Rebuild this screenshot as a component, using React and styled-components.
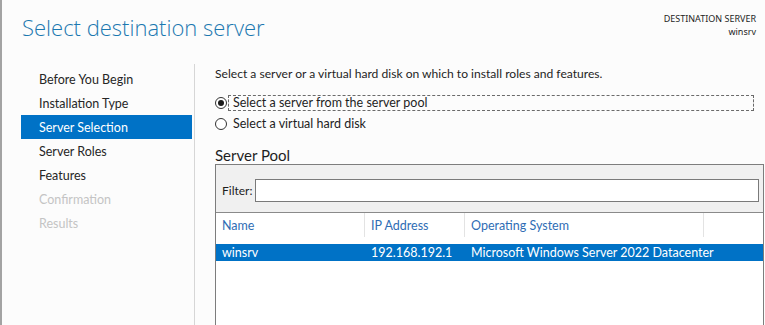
import React from "react";
import styled, { createGlobalStyle } from "styled-components";

const Global = createGlobalStyle`
  html, body { margin: 0; padding: 0; background: #fcfcfc; }
  body { font-family: Lato, "Noto Sans", sans-serif; color: #1e1e1e; }
  * { box-sizing: border-box; }
`;

const Page = styled.div`
  width: 765px;
  height: 325px;
  overflow: hidden;
  display: flex;
  flex-direction: column;
  border-left: 2px solid #a3a3a3;
  position: relative;
  &::before {
    content: "";
    position: absolute;
    left: -2px;
    top: 18px;
    width: 2px;
    height: 24px;
    background: #3a6f8f;
  }
`;

const Header = styled.header`
  display: flex;
  justify-content: space-between;
  align-items: flex-start;
  height: 64px;
  padding: 9px 9px 0 20px;
`;

const Title = styled.h1`
  margin: 0;
  padding-top: 3px;
  font-family: "Open Sans", Lato, sans-serif;
  font-weight: 300;
  font-size: 22px;
  line-height: 31px;
  color: #1b78b0;
`;

const Dest = styled.div`
  text-align: right;
  font-family: "Noto Sans", sans-serif;
  font-size: 9px;
  line-height: 13px;
  padding-top: 3px;
  color: #1e1e1e;
`;

const Body = styled.div`
  flex: 1;
  display: flex;
  min-height: 0;
`;

const Sidebar = styled.nav`
  width: 193px;
  flex: none;
  border-right: 1px solid #d6d6d6;
  padding: 3px 0 0 19px;
  display: flex;
  flex-direction: column;
`;

const NavItem = styled.div`
  height: 24px;
  width: 171px;
  display: flex;
  align-items: center;
  padding-left: 18px;
  font-size: 12.5px;
  background: ${(p) => (p.$active ? "#0072c6" : "transparent")};
  color: ${(p) => (p.$active ? "#ffffff" : p.$disabled ? "#c4c4c4" : "#262626")};
`;

const Content = styled.main`
  flex: 1;
  padding: 2px 1px 0 20px;
  display: flex;
  flex-direction: column;
  min-width: 0;
`;

const Intro = styled.p`
  margin: 0;
  font-size: 12.1px;
  line-height: 16px;
`;

const Options = styled.div`
  margin-top: 13px;
  display: flex;
  flex-direction: column;
  gap: 5px;
`;

const Option = styled.label`
  display: flex;
  align-items: center;
  gap: 1px;
  height: 16px;
  font-size: 12.5px;
`;

const Radio = styled.span`
  width: 12px;
  height: 12px;
  border-radius: 50%;
  border: 1px solid #333;
  background: #fff;
  display: flex;
  align-items: center;
  justify-content: center;
  flex: none;
  &::after {
    content: "";
    width: 6px;
    height: 6px;
    border-radius: 50%;
    background: ${(p) => (p.$checked ? "#1a1a1a" : "transparent")};
  }
`;

const OptionText = styled.span`
  flex: ${(p) => (p.$focused ? 1 : "none")};
  margin-right: ${(p) => (p.$focused ? "10px" : 0)};
  height: 16px;
  line-height: 14px;
  padding: 0 4px;
  border: 1px dashed ${(p) => (p.$focused ? "#6a6a6a" : "transparent")};
`;

const PoolTitle = styled.h2`
  margin: 14px 0 0;
  font-weight: 400;
  font-size: 15px;
  line-height: 18px;
`;

const PoolBox = styled.div`
  margin-top: 0;
  flex: 1;
  border: 1px solid #7d7d7d;
  border-bottom: none;
  background: #fff;
  display: flex;
  flex-direction: column;
`;

const FilterBar = styled.div`
  height: 48px;
  background: #f0f0f0;
  border-bottom: 1px solid #8a8a8a;
  display: flex;
  align-items: center;
  padding: 4px 4px 0 6px;
  font-size: 12px;
`;

const FilterLabel = styled.span`
  width: 33px;
  flex: none;
`;

const FilterInput = styled.div`
  flex: 1;
  height: 23px;
  border: 1px solid #7a7a7a;
  background: #fff;
`;

const Grid = styled.div`
  display: grid;
  grid-template-columns: 149px 100px 239px 1fr;
`;

const HeadCell = styled.div`
  height: 24px;
  display: flex;
  align-items: center;
  padding-left: 6px;
  font-size: 12.5px;
  color: #2f6db5;
  border-right: ${(p) => (p.$last ? "none" : "1px solid #e3e3e3")};
`;

const Row = styled.div`
  margin-top: 7px;
  height: 17px;
  display: grid;
  grid-template-columns: 149px 100px 1fr;
  background: ${(p) => (p.$selected ? "#0072c6" : "transparent")};
  color: ${(p) => (p.$selected ? "#fff" : "#1e1e1e")};
  font-size: 12.5px;
  align-items: center;
`;

const Cell = styled.div`
  padding-left: 6px;
  white-space: nowrap;
`;

const nav = [
  { label: "Before You Begin" },
  { label: "Installation Type" },
  { label: "Server Selection", active: true },
  { label: "Server Roles" },
  { label: "Features" },
  { label: "Confirmation", disabled: true },
  { label: "Results", disabled: true },
];

export default function App() {
  return (
    <>
      <Global />
      <Page>
        <Header>
          <Title>Select destination server</Title>
          <Dest>
            DESTINATION SERVER
            <br />
            winsrv
          </Dest>
        </Header>
        <Body>
          <Sidebar>
            {nav.map((n) => (
              <NavItem key={n.label} $active={n.active} $disabled={n.disabled}>
                {n.label}
              </NavItem>
            ))}
          </Sidebar>
          <Content>
            <Intro>Select a server or a virtual hard disk on which to install roles and features.</Intro>
            <Options>
              <Option>
                <Radio $checked />
                <OptionText $focused>Select a server from the server pool</OptionText>
              </Option>
              <Option>
                <Radio />
                <OptionText>Select a virtual hard disk</OptionText>
              </Option>
            </Options>
            <PoolTitle>Server Pool</PoolTitle>
            <PoolBox>
              <FilterBar>
                <FilterLabel>Filter:</FilterLabel>
                <FilterInput />
              </FilterBar>
              <Grid>
                <HeadCell>Name</HeadCell>
                <HeadCell>IP Address</HeadCell>
                <HeadCell>Operating System</HeadCell>
                <HeadCell $last />
              </Grid>
              <Row $selected>
                <Cell>winsrv</Cell>
                <Cell>192.168.192.1</Cell>
                <Cell>Microsoft Windows Server 2022 Datacenter</Cell>
              </Row>
            </PoolBox>
          </Content>
        </Body>
      </Page>
    </>
  );
}
